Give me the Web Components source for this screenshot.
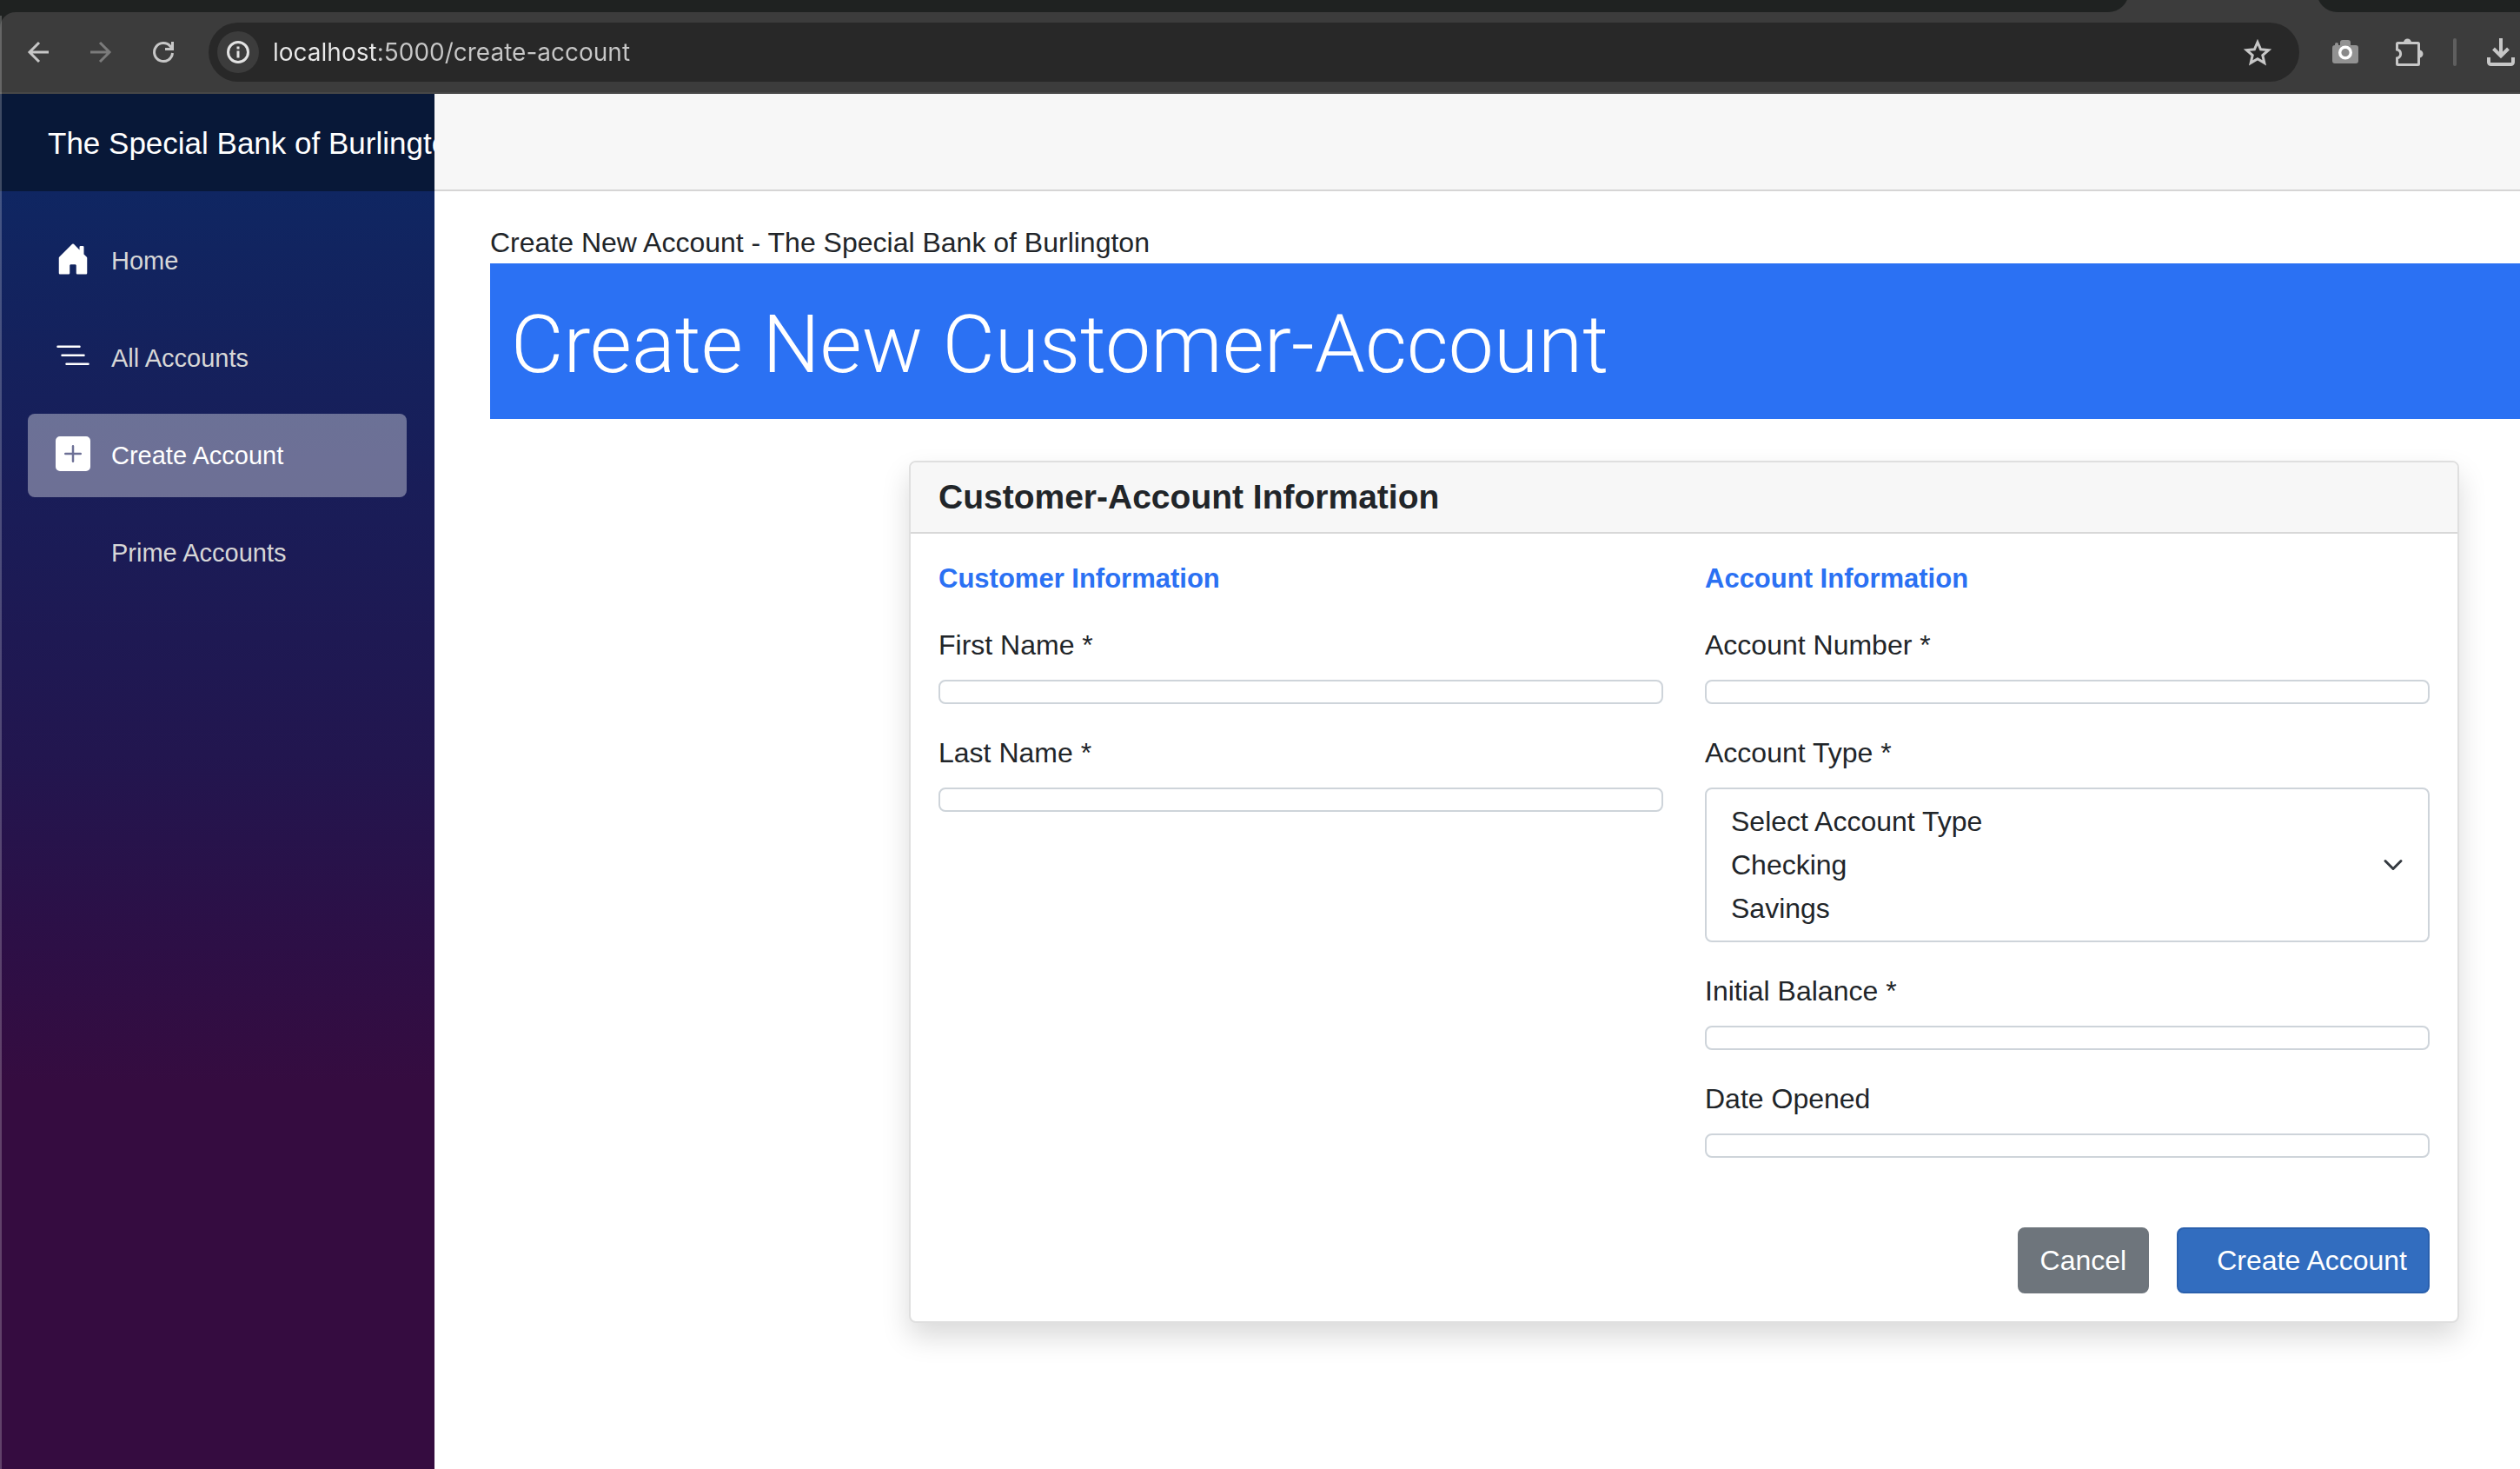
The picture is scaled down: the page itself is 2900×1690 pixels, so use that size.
<!DOCTYPE html>
<html lang="en">
<head>
<meta charset="utf-8">
<title>Create New Account</title>
<style>
  html, body { margin: 0; height: 100%; }
  body { font-family: "Liberation Sans", Arial, sans-serif; font-size: 32px; line-height: 48px; color: #212529; background: #fff; overflow: hidden; }
</style>
</head>
<body>
<bank-window>
  <browser-toolbar slot="chrome"></browser-toolbar>
  <side-nav slot="side" brand="The Special Bank of Burlington">
    <nav-item icon="house" href="#home">Home</nav-item>
    <nav-item icon="list" href="#accounts">All Accounts</nav-item>
    <nav-item icon="plus" href="#create-account" active>Create Account</nav-item>
    <nav-item href="#prime">Prime Accounts</nav-item>
  </side-nav>
  <page-banner>
    <span slot="title">Create New Account - The Special Bank of Burlington</span>
    Create New Customer-Account
  </page-banner>
  <info-card heading="Customer-Account Information">
    <field-group heading="Customer Information">
      <form-field label="First Name *"></form-field>
      <form-field label="Last Name *"></form-field>
    </field-group>
    <field-group heading="Account Information">
      <form-field label="Account Number *"></form-field>
      <select-field label="Account Type *" options="Select Account Type|Checking|Savings"></select-field>
      <form-field label="Initial Balance *"></form-field>
      <form-field label="Date Opened"></form-field>
    </field-group>
    <action-button slot="actions" kind="secondary">Cancel</action-button>
    <action-button slot="actions" kind="primary">Create Account</action-button>
  </info-card>
</bank-window>

<script>
const define = (name, render) => customElements.define(name, class extends HTMLElement {
  connectedCallback() {
    if (this.shadowRoot) return;
    const t = document.createElement('template');
    t.innerHTML = '<style>*{box-sizing:border-box}</style>' + render(this);
    this.attachShadow({ mode: 'open' }).append(t.content.cloneNode(true));
  }
});

const navIcons = {
  house: '<path d="M6.5 14.5v-3.505c0-.245.25-.495.5-.495h2c.25 0 .5.25.5.5v3.5a.5.5 0 0 0 .5.5h4a.5.5 0 0 0 .5-.5v-7a.5.5 0 0 0-.146-.354L13 5.793V2.5a.5.5 0 0 0-.5-.5h-1a.5.5 0 0 0-.5.5v1.293L8.354 1.146a.5.5 0 0 0-.708 0l-6 6A.5.5 0 0 0 1.5 7.5v7a.5.5 0 0 0 .5.5h4a.5.5 0 0 0 .5-.5Z"/>',
  list: '<path d="M4.5 11.5A.5.5 0 0 1 5 11h10a.5.5 0 0 1 0 1H5a.5.5 0 0 1-.5-.5zm-2-4A.5.5 0 0 1 3 7h10a.5.5 0 0 1 0 1H3a.5.5 0 0 1-.5-.5zm-2-4A.5.5 0 0 1 1 3h10a.5.5 0 0 1 0 1H1a.5.5 0 0 1-.5-.5z"/>',
  plus: '<path d="M2 0a2 2 0 0 0-2 2v12a2 2 0 0 0 2 2h12a2 2 0 0 0 2-2V2a2 2 0 0 0-2-2H2zm6.5 4.5v3h3a.5.5 0 0 1 0 1h-3v3a.5.5 0 0 1-1 0v-3h-3a.5.5 0 0 1 0-1h3v-3a.5.5 0 0 1 1 0z"/>'
};

define('bank-window', () => `
  <style>
    :host { display: flex; flex-direction: column; min-height: 100vh; position: relative; }
    .body { flex: 1; display: flex; }
    .main { flex: 1; min-width: 0; background: #fff; }
    .top { height: 112px; background: #f7f7f7; border-bottom: 2px solid #d6d5d5; }
    article { padding: 35px 0 0 64px; }
    .edge { position: absolute; left: 0; top: 18px; bottom: 0; width: 2px; background: rgba(255,255,255,.22); pointer-events: none; }
  </style>
  <slot name="chrome"></slot>
  <div class="body">
    <slot name="side"></slot>
    <div class="main">
      <div class="top"></div>
      <article><slot></slot></article>
    </div>
  </div>
  <div class="edge"></div>`);

define('browser-toolbar', () => `
  <style>
    :host { display: block; background: #3c3c3c; font-family: Inter, Roboto, sans-serif; }
    .tabs { height: 14px; display: flex; align-items: flex-end; gap: 216px; overflow: hidden; }
    .tabs i { height: 38px; background: #1f2221; flex: none; }
    .tabs i:first-child { flex: 1; border-bottom-right-radius: 24px; }
    .tabs i:last-child { width: 234px; border-bottom-left-radius: 24px; }
    .corner { background: #1f2221; }
    .bar { height: 94px; background: #3c3c3c; border-bottom: 2px solid #474747; border-top-left-radius: 18px; display: flex; align-items: center; padding-left: 22px; }
    .group { display: flex; align-items: center; gap: 28px; }
    .group.right { gap: 29px; }
    button { width: 44px; height: 44px; padding: 0; border: 0; background: none; display: flex; align-items: center; justify-content: center; color: #c7c7c7; flex: none; }
    svg { display: block; fill: none; stroke: currentColor; stroke-width: 3; overflow: visible; }
    .url { flex: 1; min-width: 0; height: 68px; margin: 0 31px 0 30px; padding: 0 26px 0 10px; border-radius: 34px; background: #282828; display: flex; align-items: center; }
    .url .info { width: 48px; height: 48px; border-radius: 50%; background: #3c3c3c; color: #e3e3e3; }
    .url input { flex: 1; min-width: 0; margin-left: 16px; padding: 0; border: 0; outline: 0; height: 40px; font: 28px/40px Inter, sans-serif;
      color: #c7c7c7; background: linear-gradient(90deg, #e9e9e9 119px, #c7c7c7 119px); -webkit-background-clip: text; background-clip: text; -webkit-text-fill-color: transparent; }
    .sep { width: 4px; height: 32px; border-radius: 2px; background: #5f5f5f; }
    .dim { color: #7b7b7b; }
  </style>
  <div class="tabs"><i></i><i></i></div>
  <div class="corner"><div class="bar">
    <div class="group">
      <button aria-label="Back"><svg width="24" height="24" viewBox="0 0 24 24"><path d="M24 12H2M13 1 2 12l11 11"/></svg></button>
      <button aria-label="Forward" class="dim"><svg width="24" height="24" viewBox="0 0 24 24"><path d="M0 12h22M11 1l11 11-11 11"/></svg></button>
      <button aria-label="Reload"><svg width="24" height="24" viewBox="0 0 24 24"><path d="M22.500 13A10.500 10.500 0 1 1 20 5.200L22.500 8M22.500 0v8.500H14"/></svg></button>
    </div>
    <div class="url">
      <button class="info" aria-label="Site information"><svg width="26" height="26" viewBox="0 0 26 26"><circle cx="13" cy="13" r="11.500"/><path d="M13 11.500v8M13 6.500v3"/></svg></button>
      <input aria-label="Address" value="localhost:5000/create-account">
      <button aria-label="Bookmark"><svg width="32" height="32" viewBox="0 0 32 32"><path d="m16 4.500 3.600 8.300 9 .8-6.800 6 2 8.800L16 23.700l-7.800 4.700 2-8.800-6.800-6 9-.8z"/></svg></button>
    </div>
    <div class="group right">
      <button aria-label="Screenshot"><svg width="30" height="28" viewBox="0 0 30 28" stroke="none"><path fill="#929292" d="M3 6V5a2 2 0 0 1 4 0v1h2V3a3 3 0 0 1 3-3h6a3 3 0 0 1 3 3v3h6a3 3 0 0 1 3 3v15a3 3 0 0 1-3 3H3a3 3 0 0 1-3-3V9a3 3 0 0 1 3-3z" stroke="none"/><circle cx="15" cy="14.500" r="6.300" fill="#8a8a8a" stroke="#fff" stroke-width="3.400"/></svg></button>
      <button aria-label="Extensions"><svg width="32" height="32" viewBox="0 0 32 32"><path d="M3.500 5.500h23a1 1 0 0 1 1 1v23a1 1 0 0 1-1 1h-23a1 1 0 0 1-1-1v-6.500c5.500-1.500 5.500-8.500 0-10V6.500a1 1 0 0 1 1-1z"/><path fill="currentColor" stroke="none" d="M10 5a4.500 4.500 0 0 1 9 0zM28 13.500a4.500 4.500 0 0 1 0 9z"/></svg></button>
      <span class="sep"></span>
      <button aria-label="Downloads"><svg width="32" height="32" viewBox="0 0 32 32"><path stroke-width="4" d="M16 0v20M7.500 12l8.500 8.500 8.500-8.500M2 22v5.500a2.500 2.500 0 0 0 2.500 2.500h23a2.500 2.500 0 0 0 2.500-2.500V22"/></svg></button>
    </div>
  </div></div>`);

define('side-nav', el => `
  <style>
    :host { display: block; width: 500px; flex: none; background: linear-gradient(180deg, #0c2965 0%, #1a1c57 31%, #22164f 48%, #2d0f46 62%, #350c40 72%); }
    .brand { display: flex; align-items: center; height: 112px; padding-left: 55px; background: #081838; overflow: hidden; }
    a { color: #fff; text-decoration: none; font-size: 35px; line-height: 48px; white-space: nowrap; padding-top: 2px; }
    nav { display: flex; flex-direction: column; gap: 16px; padding: 32px 32px 0; }
  </style>
  <div class="brand"><a href="#top">${el.getAttribute('brand')}</a></div>
  <nav><slot></slot></nav>`);

define('nav-item', el => `
  <style>
    :host { display: block; }
    a { display: flex; align-items: center; gap: 24px; height: 96px; padding: 0 32px; border-radius: 8px; color: #d7d7d7; text-decoration: none; font-size: 29px; line-height: 96px; white-space: nowrap; }
    :host([active]) a { background: rgba(255,255,255,.37); color: #fff; }
    svg { width: 40px; height: 40px; fill: #fff; margin-bottom: 4px; flex: none; }
  </style>
  <a href="${el.getAttribute('href')}"><svg viewBox="0 0 16 16" aria-hidden="true">${navIcons[el.getAttribute('icon')] || ''}</svg><slot></slot></a>`);

define('page-banner', () => `
  <style>
    :host { display: block; margin-bottom: 48px; }
    h1 { margin: 0; padding: 36px 24px 28px; background: #2b71f3; color: #fff; font: 300 93px/115px Roboto, "Liberation Sans", sans-serif; white-space: nowrap; }
  </style>
  <slot name="title"></slot>
  <h1><slot></slot></h1>`);

define('info-card', el => `
  <style>
    :host { display: block; padding: 0 70px 0 482px; }
    section { border: 2px solid #dfdfdf; border-radius: 8px; background: #fff; box-shadow: 0 16px 32px rgba(0,0,0,.15); }
    header { padding: 16px 32px; background: #f7f7f7; border-bottom: 2px solid #d8d8d8; border-radius: 6px 6px 0 0; }
    h5 { margin: 0; font-size: 39px; line-height: 48px; font-weight: 700; }
    form { padding: 32px; }
    .cols { display: grid; grid-template-columns: 1fr 1fr; gap: 48px; }
    .actions { display: flex; justify-content: flex-end; gap: 32px; margin-top: 48px; }
  </style>
  <section>
    <header><h5>${el.getAttribute('heading')}</h5></header>
    <form onsubmit="return false">
      <div class="cols"><slot></slot></div>
      <div class="actions"><slot name="actions"></slot></div>
    </form>
  </section>`);

define('field-group', el => `
  <style>
    :host { display: block; }
    h6 { margin: 0 0 32px; font-size: 31px; line-height: 40px; font-weight: 700; color: #2b71f3; }
  </style>
  <h6>${el.getAttribute('heading')}</h6><slot></slot>`);

define('form-field', el => `
  <style>
    :host { display: block; margin-bottom: 32px; }
    label { display: block; margin-bottom: 16px; }
    input { display: block; width: 100%; height: 28px; margin: 0; padding: 0 24px; border: 2px solid #ced4da; border-radius: 8px; background: #fff; font: 16px/24px "Liberation Sans", sans-serif; }
  </style>
  <label for="f">${el.getAttribute('label')}</label><input id="f" type="text">`);

define('select-field', el => `
  <style>
    :host { display: block; margin-bottom: 32px; }
    label { display: block; margin-bottom: 16px; }
    .box { display: grid; align-items: center; }
    .box > * { grid-area: 1 / 1; }
    select { appearance: none; display: block; width: 100%; height: 178px; margin: 0; padding: 12px 24px; border: 2px solid #ced4da; border-radius: 8px; background: #fff; color: #212529; font: inherit; overflow: hidden; outline: 0; }
    option { padding: 7px 4px 0; height: 50px; min-height: 50px; }
    svg { justify-self: end; margin-right: 30px; width: 24px; height: 24px; fill: none; stroke: #343a40; stroke-width: 2; stroke-linecap: round; stroke-linejoin: round; pointer-events: none; z-index: 1; }
  </style>
  <label for="s">${el.getAttribute('label')}</label>
  <div class="box">
    <select id="s" size="3">${el.getAttribute('options').split('|').map(o => `<option>${o}</option>`).join('')}</select>
    <svg viewBox="0 0 16 16" aria-hidden="true"><path d="m2 5 6 6 6-6"/></svg>
  </div>`);

define('action-button', el => `
  <style>
    :host { display: block; }
    button { display: block; padding: 12px 24px; border: 2px solid #6e757c; border-radius: 8px; background: #6e757c; color: #fff; font: inherit; white-space: nowrap; }
    :host([kind="primary"]) button { background: #326dbf; border-color: #2a60ad; padding-left: 44px; }
  </style>
  <button type="button"><slot></slot></button>`);
</script>
</body>
</html>
